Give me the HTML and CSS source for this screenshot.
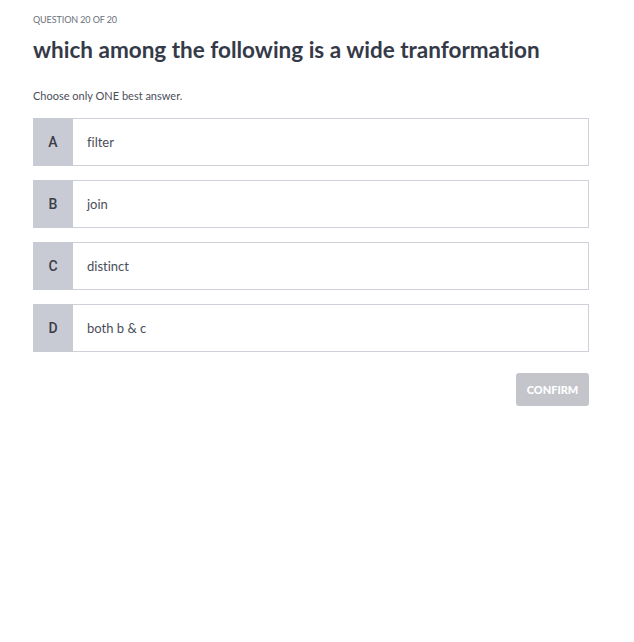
FILE: index.html
```html
<!DOCTYPE html>
<html>
<head>
<meta charset="utf-8">
<link rel="stylesheet" href="styles.css">
</head>
<body>
<div class="quiz">
  <div class="counter">QUESTION 20 OF 20</div>
  <h1 class="question">which among the following is a wide tranformation</h1>
  <div class="hint">Choose only ONE best answer.</div>
  <div class="options">
    <div class="option"><div class="letter">A</div><div class="text">filter</div></div>
    <div class="option"><div class="letter">B</div><div class="text">join</div></div>
    <div class="option"><div class="letter">C</div><div class="text">distinct</div></div>
    <div class="option"><div class="letter">D</div><div class="text">both b &amp; c</div></div>
  </div>
  <div class="actions"><button class="confirm">CONFIRM</button></div>
</div>
</body>
</html>
```
FILE: styles.css
```css
html, body { margin: 0; padding: 0; background: #fff; }
body { font-family: Lato, "Noto Sans", sans-serif; color: #3d4150; font-variant-ligatures: none; }
.quiz { padding: 14px 45px 0 33px; }
.counter { font-size: 9px; color: #6b6f7b; line-height: 12px; letter-spacing: -0.1px; }
.question { margin: 9px 0 0; font-size: 22.5px; font-weight: 700; color: #353a48; line-height: 30px; font-variant-ligatures: none; }
.hint { margin-top: 24px; font-size: 11px; color: #4a4e5a; line-height: 14px; }
.options { margin-top: 15px; display: flex; flex-direction: column; gap: 14px; }
.option { display: flex; height: 48px; box-sizing: border-box; border: 1px solid #cfd0d8; background: #fff; }
.letter { width: 40px; margin: -1px 0 -1px -1px; background: #c9cbd4; display: flex; align-items: center; justify-content: center; font-family: Roboto, "Liberation Sans", sans-serif; font-size: 14px; font-weight: 500; color: #3a3e4a; }
.text { display: flex; align-items: center; padding-left: 14px; font-size: 13px; color: #4a4e5a; }
.actions { display: flex; justify-content: flex-end; margin-top: 21px; }
.confirm { width: 73px; height: 33px; border: none; border-radius: 3px; background: #c4c5cb; color: #fff; font-family: Lato, sans-serif; font-weight: 900; font-size: 11px; padding: 0; }
```
